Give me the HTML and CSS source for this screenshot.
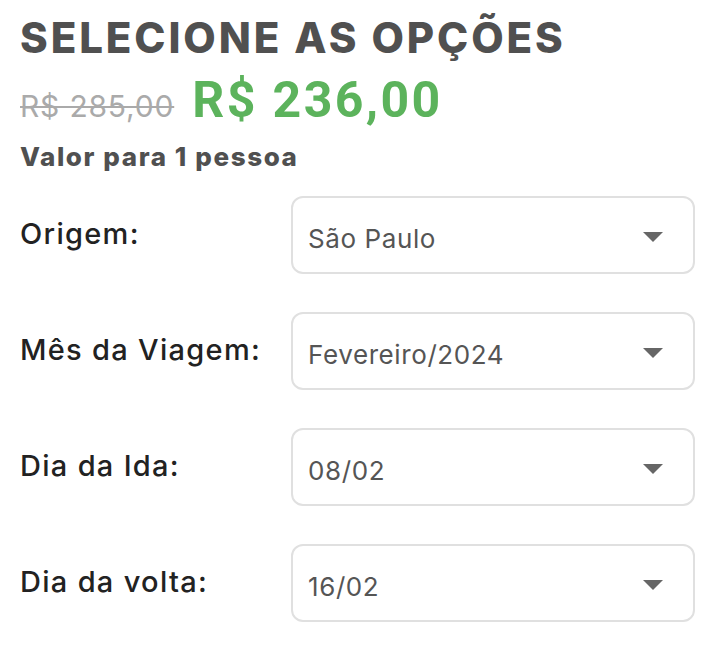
FILE: index.html
```html
<!DOCTYPE html>
<html lang="pt-BR">
<head>
    <meta charset="UTF-8">
    <title>Selecione as opções</title>
    <link rel="stylesheet" href="styles.css">
</head>
<body>
    <div class="container">
        <h1 class="title">SELECIONE AS OPÇÕES</h1>
        <div class="price">
            <span class="old-price">R$ 285,00</span>
            <span class="new-price">R$ 236,00</span>
        </div>
        <p class="per-person">Valor para 1 pessoa</p>

        <div class="options">
            <div class="option-row">
                <label class="option-label">Origem:</label>
                <div class="select-box">
                    <span class="select-value">São Paulo</span>
                    <span class="arrow"></span>
                </div>
            </div>
            <div class="option-row">
                <label class="option-label">Mês da Viagem:</label>
                <div class="select-box">
                    <span class="select-value">Fevereiro/2024</span>
                    <span class="arrow"></span>
                </div>
            </div>
            <div class="option-row">
                <label class="option-label">Dia da Ida:</label>
                <div class="select-box">
                    <span class="select-value">08/02</span>
                    <span class="arrow"></span>
                </div>
            </div>
            <div class="option-row">
                <label class="option-label">Dia da volta:</label>
                <div class="select-box">
                    <span class="select-value">16/02</span>
                    <span class="arrow"></span>
                </div>
            </div>
        </div>
    </div>
</body>
</html>
```

FILE: styles.css
```css
body {
    margin: 0;
    background: #fff;
    font-family: "Inter", "Noto Sans", sans-serif;
}

.container {
    padding: 15px 21px 0 20px;
}

.title {
    margin: 0;
    font-family: "Inter", sans-serif;
    font-weight: 800;
    font-size: 42px;
    line-height: 46px;
    color: #505050;
    letter-spacing: 2.9px;
}

.price {
    display: flex;
    align-items: baseline;
    gap: 18px;
    margin-top: 10px;
    height: 56px;
}

.old-price {
    font-family: "Inter", sans-serif;
    font-size: 30px;
    color: #aaa;
    letter-spacing: 0.8px;
    text-decoration: line-through;
    text-decoration-thickness: 2px;
}

.new-price {
    font-family: "Roboto", sans-serif;
    font-weight: 700;
    font-size: 50px;
    color: #5cb35c;
    letter-spacing: 2.4px;
}

/* valor por pessoa */
.per-person {
    margin: 14px 0 0 0;
    font-family: "Inter", sans-serif;
    font-weight: 800;
    font-size: 26px;
    color: #505050;
    letter-spacing: 1.6px;
}

.options {
    display: flex;
    flex-direction: column;
    gap: 38px;
    margin-top: 24px;
}

.option-row {
    display: grid;
    grid-template-columns: 271px 1fr;
    align-items: center;
}

.option-label {
    font-family: "Inter", sans-serif;
    font-weight: 500;
    font-size: 29px;
    color: #222;
    letter-spacing: 1.3px;
    padding-bottom: 4px;
}

.select-box {
    display: flex;
    align-items: center;
    justify-content: space-between;
    height: 74px;
    padding: 0 30px 0 15px;
    border: 2px solid #e0e0e0;
    border-radius: 12px;
}

.select-value {
    font-size: 26px;
    color: #555;
    letter-spacing: 0.6px;
    padding-top: 6px;
}

.arrow {
    width: 0;
    height: 0;
    margin-top: 4px;
    border-left: 10px solid transparent;
    border-right: 10px solid transparent;
    border-top: 10px solid #666;
}
```
